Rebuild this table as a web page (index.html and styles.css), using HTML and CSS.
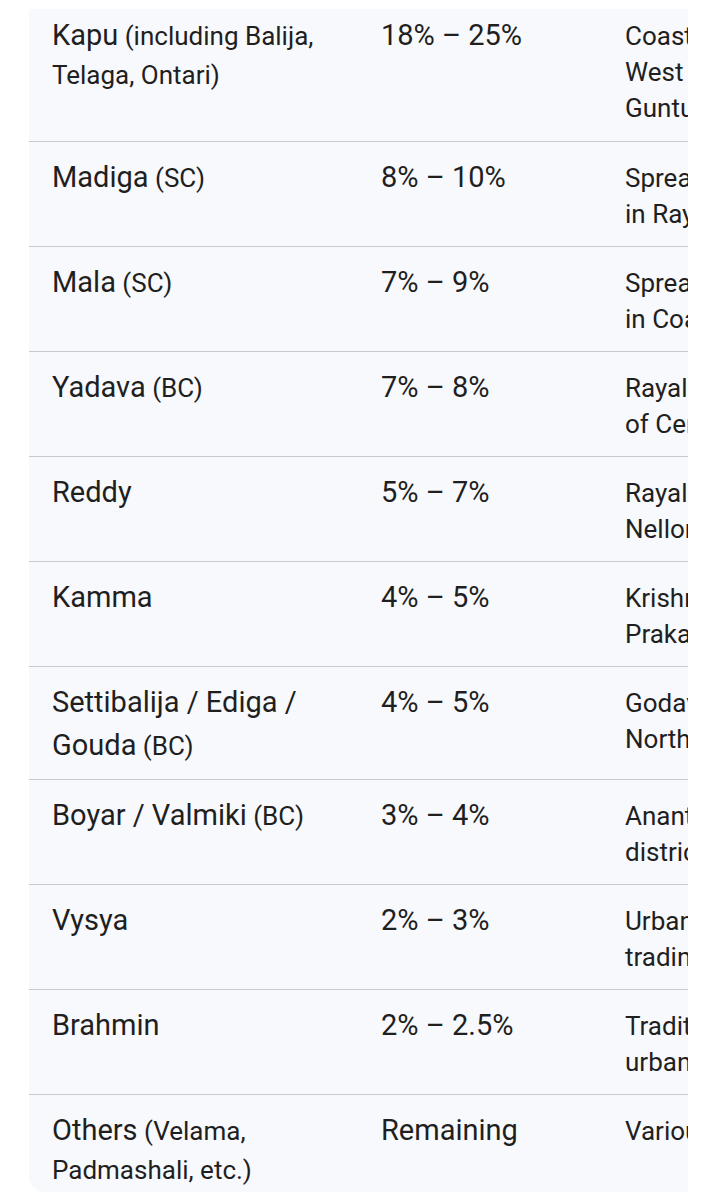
FILE: index.html
```html
<!DOCTYPE html>
<html>
<head>
<meta charset="utf-8">
<link rel="stylesheet" href="styles.css">
</head>
<body>
<div class="scroller">
<table class="grid">
<colgroup><col class="c1"><col class="c2"><col class="c3"></colgroup>
<tbody>
<tr class="first"><td><span class="name">Kapu</span> (including Balija, Telaga, Ontari)</td><td class="pct">18% – 25%</td><td class="region">Coastal districts (East &amp;<br>West Godavari, Krishna,<br>Guntur)</td></tr>
<tr><td><span class="name">Madiga</span> (SC)</td><td class="pct">8% – 10%</td><td class="region">Spread across the state, high<br>in Rayalaseema</td></tr>
<tr><td><span class="name">Mala</span> (SC)</td><td class="pct">7% – 9%</td><td class="region">Spread across the state, high<br>in Coastal Andhra</td></tr>
<tr><td><span class="name">Yadava</span> (BC)</td><td class="pct">7% – 8%</td><td class="region">Rayalaseema and parts<br>of Central Andhra</td></tr>
<tr><td><span class="name">Reddy</span></td><td class="pct">5% – 7%</td><td class="region">Rayalaseema and<br>Nellore</td></tr>
<tr><td><span class="name">Kamma</span></td><td class="pct">4% – 5%</td><td class="region">Krishna, Guntur,<br>Prakasam</td></tr>
<tr><td><span class="name">Settibalija / Ediga / Gouda</span> (BC)</td><td class="pct">4% – 5%</td><td class="region">Godavari districts,<br>North Andhra</td></tr>
<tr><td><span class="name">Boyar / Valmiki</span> (BC)</td><td class="pct">3% – 4%</td><td class="region">Anantapur, Kurnool<br>districts</td></tr>
<tr><td><span class="name">Vysya</span></td><td class="pct">2% – 3%</td><td class="region">Urban areas,<br>trading communities</td></tr>
<tr><td><span class="name">Brahmin</span></td><td class="pct">2% – 2.5%</td><td class="region">Traditionally spread in<br>urban centers</td></tr>
<tr class="last"><td><span class="name">Others</span> (Velama, Padmashali, etc.)</td><td class="pct">Remaining</td><td class="region">Various</td></tr>
</tbody>
</table>
</div>
</body>
</html>
```
FILE: styles.css
```css
html, body {
  margin: 0;
  padding: 0;
  background: #ffffff;
}
body {
  padding-top: 9px;
  font-family: Roboto, "Noto Sans", sans-serif;
  color: #1f1f1f;
}
.scroller {
  margin-left: 29px;
  width: 659px;
  height: 1183px;
  overflow: hidden;
  background: #f8f9fc;
  border-bottom-left-radius: 16px;
}
.grid {
  border-collapse: collapse;
  width: 980px;
  table-layout: fixed;
}
.c1 { width: 329px; }
.c2 { width: 244px; }
.c3 { width: 407px; }
.grid td {
  font-size: 26px;
  line-height: 36px;
  padding: 14px 23px 12px 23px;
  vertical-align: baseline;
  border-top: 1px solid #c9cacd;
}
.grid td.region {
  padding-bottom: 14px;
}
.grid tr.first td {
  border-top: none;
  padding-top: 5px;
}
.grid tr.first td.region {
  padding-bottom: 15px;
}
.name {
  font-size: 29px;
  line-height: 43px;
}
.grid td.pct {
  font-size: 29px;
  line-height: 43px;
}
```
